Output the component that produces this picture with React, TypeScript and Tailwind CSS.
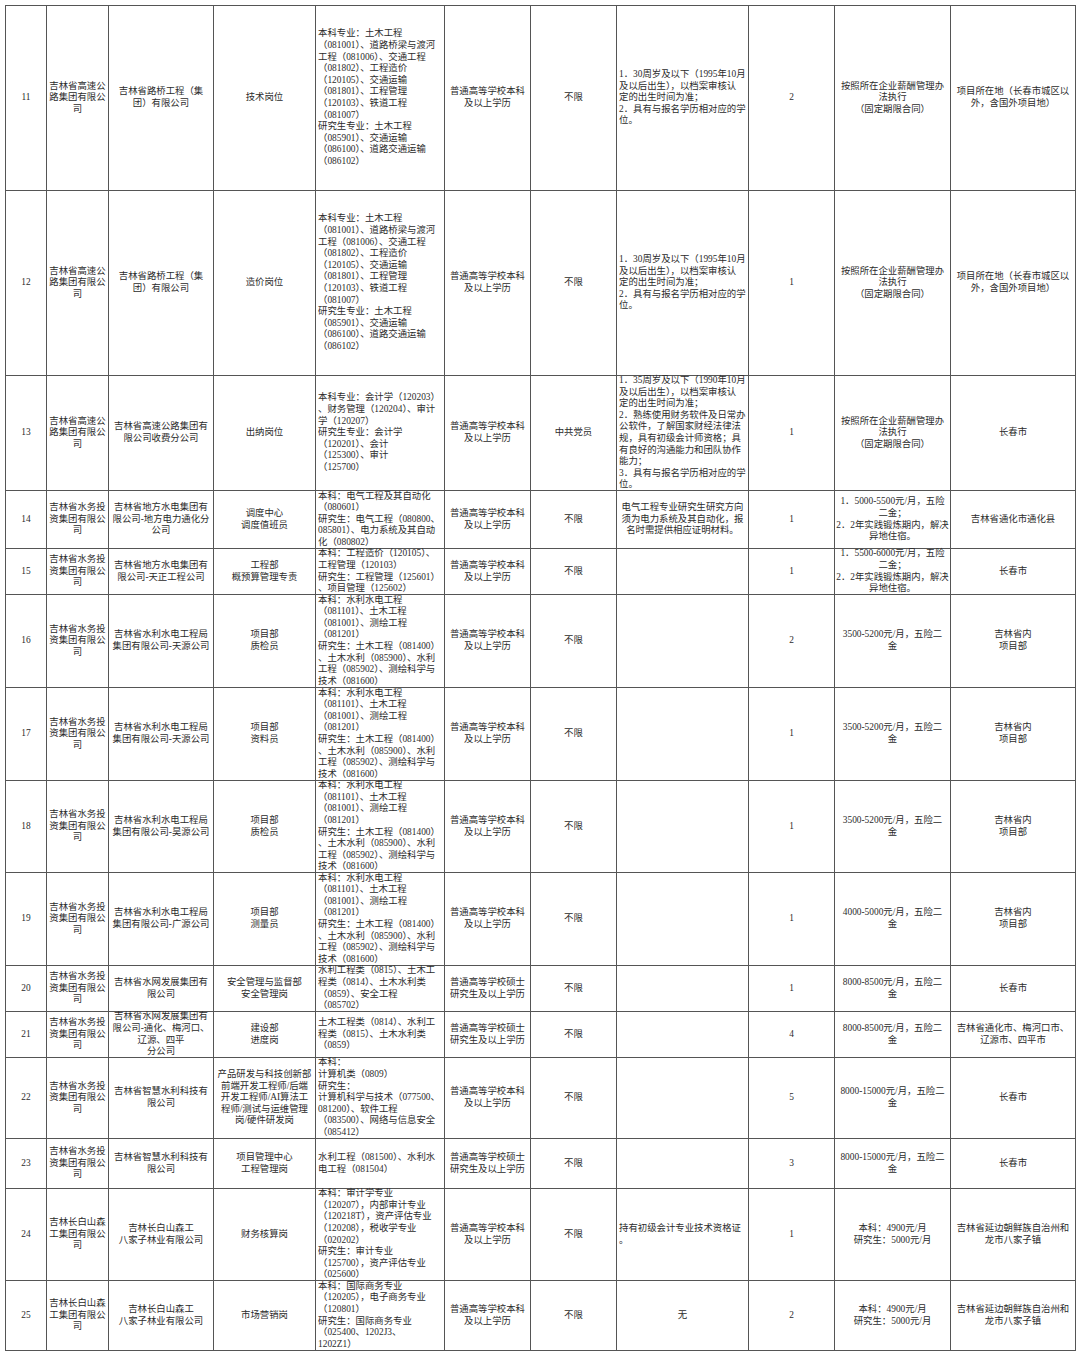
const MAJOR_ROAD =
  "本科专业：土木工程\n（081001）、道路桥梁与渡河\n工程（081006）、交通工程\n（081802）、工程造价\n（120105）、交通运输\n（081801）、工程管理\n（120103）、铁道工程\n（081007）\n研究生专业：土木工程\n（085901）、交通运输\n（086100）、道路交通运输\n（086102）";
const MAJOR_WATER =
  "本科：水利水电工程\n（081101）、土木工程\n（081001）、测绘工程\n（081201）\n研究生：土木工程（081400）\n、土木水利（085900）、水利\n工程（085902）、测绘科学与\n技术（081600）";
const REQ_30 =
  "1．30周岁及以下（1995年10月\n及以后出生），以档案审核认\n定的出生时间为准；\n2．具有与报名学历相对应的学\n位。";
const PAY_CORP = "按照所在企业薪酬管理办\n法执行\n（固定期限合同）";
const EDU_BK = "普通高等学校本科\n及以上学历";
const EDU_SS = "普通高等学校硕士\n研究生及以上学历";
const HIGHWAY = "吉林省高速公\n路集团有限公\n司";
const WATER = "吉林省水务投\n资集团有限公\n司";
const FOREST = "吉林长白山森\n工集团有限公\n司";
const SHUILI_PAY = "3500-5200元/月，五险二\n金";

type Row = {
  no: string;
  group: string;
  unit: string;
  post: string;
  major: string;
  edu: string;
  party: string;
  req: string;
  reqCenter?: boolean;
  count: string;
  pay: string;
  place: string;
};

const ROWS: Row[] = [
  {
    no: "11", group: HIGHWAY, unit: "吉林省路桥工程（集\n团）有限公司", post: "技术岗位",
    major: MAJOR_ROAD, edu: EDU_BK, party: "不限", req: REQ_30, count: "2", pay: PAY_CORP,
    place: "项目所在地（长春市城区以\n外，含国外项目地）",
  },
  {
    no: "12", group: HIGHWAY, unit: "吉林省路桥工程（集\n团）有限公司", post: "造价岗位",
    major: MAJOR_ROAD, edu: EDU_BK, party: "不限", req: REQ_30, count: "1", pay: PAY_CORP,
    place: "项目所在地（长春市城区以\n外，含国外项目地）",
  },
  {
    no: "13", group: HIGHWAY, unit: "吉林省高速公路集团有\n限公司收费分公司", post: "出纳岗位",
    major: "本科专业：会计学（120203）\n、财务管理（120204）、审计\n学（120207）\n研究生专业：会计学\n（120201）、会计\n（125300）、审计\n（125700）",
    edu: EDU_BK, party: "中共党员",
    req: "1．35周岁及以下（1990年10月\n及以后出生），以档案审核认\n定的出生时间为准；\n2．熟练使用财务软件及日常办\n公软件，了解国家财经法律法\n规，具有初级会计师资格；具\n有良好的沟通能力和团队协作\n能力；\n3．具有与报名学历相对应的学\n位。",
    count: "1", pay: PAY_CORP, place: "长春市",
  },
  {
    no: "14", group: WATER, unit: "吉林省地方水电集团有\n限公司-地方电力通化分\n公司", post: "调度中心\n调度值班员",
    major: "本科：电气工程及其自动化\n（080601）\n研究生：电气工程（080800、\n085801）、电力系统及其自动\n化（080802）",
    edu: EDU_BK, party: "不限",
    req: "电气工程专业研究生研究方向\n须为电力系统及其自动化，报\n名时需提供相应证明材料。", reqCenter: true,
    count: "1", pay: "1．5000-5500元/月，五险\n二金；\n2．2年实践锻炼期内，解决\n异地住宿。", place: "吉林省通化市通化县",
  },
  {
    no: "15", group: WATER, unit: "吉林省地方水电集团有\n限公司-天正工程公司", post: "工程部\n概预算管理专责",
    major: "本科：工程造价（120105）、\n工程管理（120103）\n研究生：工程管理（125601）\n、项目管理（125602）",
    edu: EDU_BK, party: "不限", req: "", count: "1",
    pay: "1．5500-6000元/月，五险\n二金；\n2．2年实践锻炼期内，解决\n异地住宿。", place: "长春市",
  },
  {
    no: "16", group: WATER, unit: "吉林省水利水电工程局\n集团有限公司-天源公司", post: "项目部\n质检员",
    major: MAJOR_WATER, edu: EDU_BK, party: "不限", req: "", count: "2", pay: SHUILI_PAY, place: "吉林省内\n项目部",
  },
  {
    no: "17", group: WATER, unit: "吉林省水利水电工程局\n集团有限公司-天源公司", post: "项目部\n资料员",
    major: MAJOR_WATER, edu: EDU_BK, party: "不限", req: "", count: "1", pay: SHUILI_PAY, place: "吉林省内\n项目部",
  },
  {
    no: "18", group: WATER, unit: "吉林省水利水电工程局\n集团有限公司-昊源公司", post: "项目部\n质检员",
    major: MAJOR_WATER, edu: EDU_BK, party: "不限", req: "", count: "1", pay: SHUILI_PAY, place: "吉林省内\n项目部",
  },
  {
    no: "19", group: WATER, unit: "吉林省水利水电工程局\n集团有限公司-广源公司", post: "项目部\n测量员",
    major: MAJOR_WATER, edu: EDU_BK, party: "不限", req: "", count: "1", pay: "4000-5000元/月，五险二\n金", place: "吉林省内\n项目部",
  },
  {
    no: "20", group: WATER, unit: "吉林省水网发展集团有\n限公司", post: "安全管理与监督部\n安全管理岗",
    major: "水利工程类（0815）、土木工\n程类（0814）、土木水利类\n（0859）、安全工程\n（085702）",
    edu: EDU_SS, party: "不限", req: "", count: "1", pay: "8000-8500元/月，五险二\n金", place: "长春市",
  },
  {
    no: "21", group: WATER, unit: "吉林省水网发展集团有\n限公司-通化、梅河口、\n辽源、四平\n分公司", post: "建设部\n进度岗",
    major: "土木工程类（0814）、水利工\n程类（0815）、土木水利类\n（0859）",
    edu: EDU_SS, party: "不限", req: "", count: "4", pay: "8000-8500元/月，五险二\n金",
    place: "吉林省通化市、梅河口市、\n辽源市、四平市",
  },
  {
    no: "22", group: WATER, unit: "吉林省智慧水利科技有\n限公司",
    post: "产品研发与科技创新部\n前端开发工程师/后端\n开发工程师/AI算法工\n程师/测试与运维管理\n岗/硬件研发岗",
    major: "本科：\n计算机类（0809）\n研究生：\n计算机科学与技术（077500、\n081200）、软件工程\n（083500）、网络与信息安全\n（085412）",
    edu: EDU_BK, party: "不限", req: "", count: "5", pay: "8000-15000元/月，五险二\n金", place: "长春市",
  },
  {
    no: "23", group: WATER, unit: "吉林省智慧水利科技有\n限公司", post: "项目管理中心\n工程管理岗",
    major: "水利工程（081500）、水利水\n电工程（081504）",
    edu: EDU_SS, party: "不限", req: "", count: "3", pay: "8000-15000元/月，五险二\n金", place: "长春市",
  },
  {
    no: "24", group: FOREST, unit: "吉林长白山森工\n八家子林业有限公司", post: "财务核算岗",
    major: "本科：审计学专业\n（120207），内部审计专业\n（120218T），资产评估专业\n（120208），税收学专业\n（020202）\n研究生：审计专业\n（125700），资产评估专业\n（025600）",
    edu: EDU_BK, party: "不限", req: "持有初级会计专业技术资格证\n。", count: "1",
    pay: "本科：4900元/月\n研究生：5000元/月", place: "吉林省延边朝鲜族自治州和\n龙市八家子镇",
  },
  {
    no: "25", group: FOREST, unit: "吉林长白山森工\n八家子林业有限公司", post: "市场营销岗",
    major: "本科：国际商务专业\n（120205），电子商务专业\n（120801）\n研究生：国际商务专业\n（025400、1202J3、\n1202Z1）",
    edu: EDU_BK, party: "不限", req: "无", reqCenter: true, count: "2",
    pay: "本科：4900元/月\n研究生：5000元/月", place: "吉林省延边朝鲜族自治州和\n龙市八家子镇",
  },
];

function Cell({ text, left }: { text: string; left?: boolean }) {
  return (
    <div
      className={`flex flex-col justify-center overflow-visible border-r border-b border-[#555] ${
        left ? "items-start pl-[2px] text-left" : "items-center text-center"
      }`}
    >
      {text.split("\n").map((line, i) =>
        line ? (
          <span key={i} className="block whitespace-nowrap">
            {line}
          </span>
        ) : null
      )}
    </div>
  );
}

export default function App() {
  return (
    <div className="min-h-[1357px] w-[1080px] bg-white pt-[5px] pl-[5px]">
      <div className="grid w-[1071px] grid-cols-[41px_62px_105px_102px_129px_86px_86px_132px_86px_116px_125px] grid-rows-[185px_185px_115px_58px_46px_93px_93px_92px_93px_46px_46px_81px_50px_92px_70px] border-t border-l border-[#555] font-['Liberation_Serif','Noto_Sans_CJK_SC',serif] text-[9.4px] leading-[11.6px] text-[#2b2b2b]">
        {ROWS.map((r) => (
          <div key={r.no} className="contents">
            <Cell text={r.no} />
            <Cell text={r.group} />
            <Cell text={r.unit} />
            <Cell text={r.post} />
            <Cell text={r.major} left />
            <Cell text={r.edu} />
            <Cell text={r.party} />
            <Cell text={r.req} left={!r.reqCenter} />
            <Cell text={r.count} />
            <Cell text={r.pay} />
            <Cell text={r.place} />
          </div>
        ))}
      </div>
    </div>
  );
}
